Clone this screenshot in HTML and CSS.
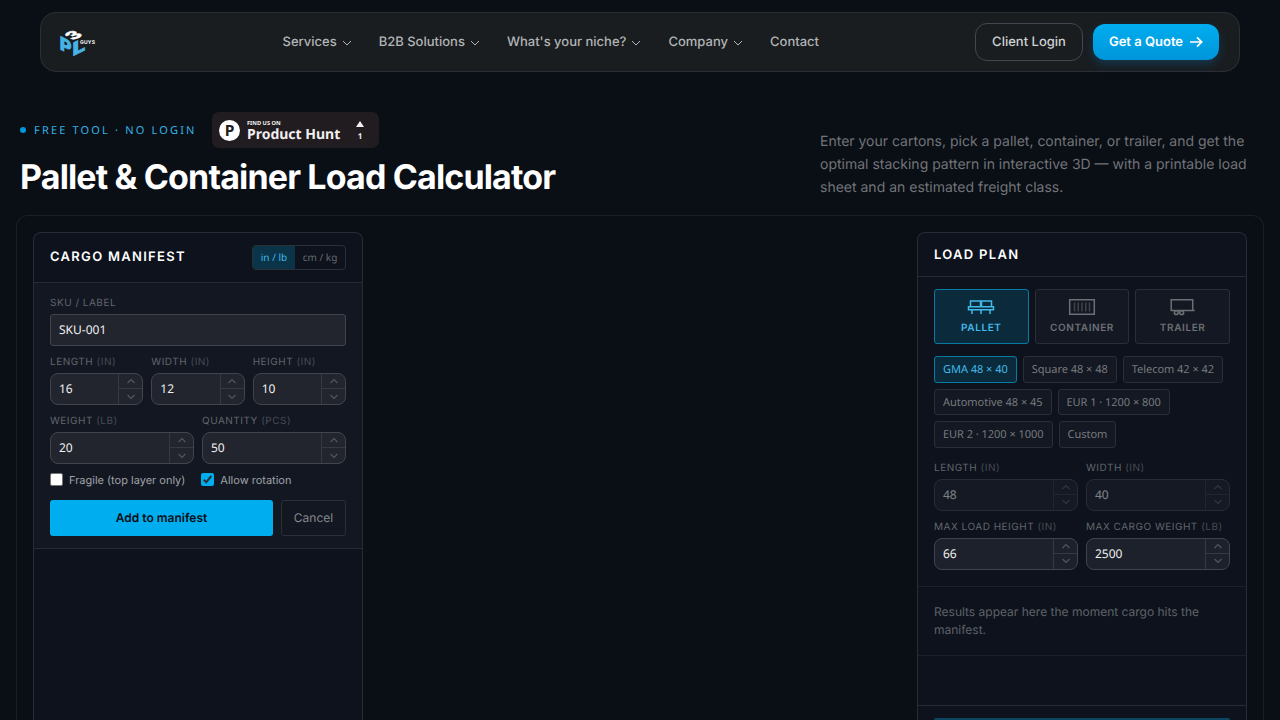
FILE: index.html
```html
<!DOCTYPE html>
<html lang="en">
<head>
<meta charset="utf-8">
<title>Pallet &amp; Container Load Calculator</title>
<link rel="stylesheet" href="styles.css">
</head>
<body>
<svg class="defs" width="0" height="0">
  <symbol id="down" viewBox="0 0 10 6"><path d="M1 1l4 4 4-4" fill="none" stroke="currentColor" stroke-width="1"/></symbol>
  <symbol id="up" viewBox="0 0 10 6"><path d="M1.500 5L5 1.500 8.500 5" fill="none" stroke="currentColor" stroke-width="1.200"/></symbol>
  <symbol id="dn" viewBox="0 0 10 6"><path d="M1.500 1L5 4.500 8.500 1" fill="none" stroke="currentColor" stroke-width="1.200"/></symbol>
</svg>
<header class="nav">
  <svg class="logo" width="36" height="30" viewBox="0 0 36 30">
    <g font-family="Inter, sans-serif" font-weight="800">
      <text transform="matrix(1.050 -.5 .85 .48 12.800 13.600)" font-size="16" fill="#fff" stroke="#fff" stroke-width=".5">3</text>
      <text transform="matrix(1 .5 0 1 -.2 22)" font-size="18" fill="#48b4e6" stroke="#48b4e6" stroke-width=".8">P</text>
      <text transform="matrix(1.250 -.62 0 1 12.400 29.200)" font-size="18" fill="#48b4e6" stroke="#48b4e6" stroke-width=".8">L</text>
      <text x="20" y="16.700" font-size="5" fill="#fff" textLength="15" font-weight="700">GUYS</text>
    </g>
  </svg>
  <nav class="links">
    <a>Services<svg class="chev"><use href="#down"/></svg></a>
    <a>B2B Solutions<svg class="chev"><use href="#down"/></svg></a>
    <a>What's your niche?<svg class="chev"><use href="#down"/></svg></a>
    <a>Company<svg class="chev"><use href="#down"/></svg></a>
    <a>Contact</a>
  </nav>
  <div class="actions">
    <a class="login">Client Login</a>
    <a class="quote">Get a Quote<svg width="14" height="12" viewBox="0 0 14 12"><path d="M1 6h11.500M8 1.300L12.700 6 8 10.700" fill="none" stroke="#fff" stroke-width="1.700"/></svg></a>
  </div>
</header>
<section class="hero">
  <div class="intro">
    <div class="meta">
      <span class="eyebrow"><i class="dot"></i>FREE TOOL · NO LOGIN</span>
      <a class="ph">
        <span class="ph-mark">P</span>
        <span class="ph-name"><small>FIND US ON</small><b>Product Hunt</b></span>
        <span class="ph-votes"><i></i>1</span>
      </a>
    </div>
    <h1>Pallet &amp; Container Load Calculator</h1>
  </div>
  <p class="lead">Enter your cartons, pick a pallet, container, or trailer, and get the optimal stacking pattern in interactive 3D — with a printable load sheet and an estimated freight class.</p>
</section>
<main class="stage">
  <section class="panel">
    <div class="head head-cargo"><h2>CARGO MANIFEST</h2><div class="units"><span class="on">in / lb</span><span>cm / kg</span></div></div>
    <div class="form">
      <div class="field"><label>SKU / LABEL</label><div class="box plain">SKU-001</div></div>
      <div class="three">
        <div class="field"><label>LENGTH <em>(IN)</em></label><div class="box"><span>16</span><div class="step"><i><svg><use href="#up"/></svg></i><i><svg><use href="#dn"/></svg></i></div></div></div>
        <div class="field"><label>WIDTH <em>(IN)</em></label><div class="box"><span>12</span><div class="step"><i><svg><use href="#up"/></svg></i><i><svg><use href="#dn"/></svg></i></div></div></div>
        <div class="field"><label>HEIGHT <em>(IN)</em></label><div class="box"><span>10</span><div class="step"><i><svg><use href="#up"/></svg></i><i><svg><use href="#dn"/></svg></i></div></div></div>
      </div>
      <div class="two">
        <div class="field"><label>WEIGHT <em>(LB)</em></label><div class="box"><span>20</span><div class="step"><i><svg><use href="#up"/></svg></i><i><svg><use href="#dn"/></svg></i></div></div></div>
        <div class="field"><label>QUANTITY <em>(PCS)</em></label><div class="box"><span>50</span><div class="step"><i><svg><use href="#up"/></svg></i><i><svg><use href="#dn"/></svg></i></div></div></div>
      </div>
      <div class="checks">
        <span><i class="check"></i>Fragile (top layer only)</span>
        <span><i class="check checked"><svg width="13" height="13" viewBox="0 0 13 13"><path d="M2.700 6.800L5.200 9.300 10.300 3" fill="none" stroke="#26313b" stroke-width="2"/></svg></i>Allow rotation</span>
      </div>
      <div class="buttons"><a class="add">Add to manifest</a><a class="cancel">Cancel</a></div>
    </div>
  </section>
  <section class="panel">
    <div class="head"><h2>LOAD PLAN</h2></div>
    <div class="plan">
      <div class="modes">
        <a class="on"><svg width="28" height="18" viewBox="0 0 28 18" fill="none" stroke="currentColor" stroke-width="1.500"><path d="M3.500 8.500V3h10v5.500M14.500 8.500V3h10v5.500M1.500 8.800h25v3h-25zM5 12v4M14 12v4M23 12v4"/></svg>PALLET</a>
        <a><svg width="28" height="18" viewBox="0 0 28 18" fill="none" stroke="currentColor" stroke-width="1.500"><path d="M1.700 1.700h24.600v14.600H1.700z"/><path d="M6.500 4.500v9M10.250 4.500v9M14 4.500v9M17.750 4.500v9M21.500 4.500v9" opacity=".5"/></svg>CONTAINER</a>
        <a><svg width="28" height="18" viewBox="0 0 28 18" fill="none" stroke="currentColor" stroke-width="1.500"><path d="M5 12.500H2.200V1.700h21.500v10.800M5 12.500h20.700"/><circle cx="7.300" cy="14.700" r="1.900"/><circle cx="12.700" cy="14.700" r="1.900"/></svg>TRAILER</a>
      </div>
      <div class="chips"><a class="on">GMA 48 × 40</a><a>Square 48 × 48</a><a>Telecom 42 × 42</a><a>Automotive 48 × 45</a><a>EUR 1 · 1200 × 800</a><a>EUR 2 · 1200 × 1000</a><a>Custom</a></div>
      <div class="two">
        <div class="field"><label>LENGTH <em>(IN)</em></label><div class="box off"><span>48</span><div class="step"><i><svg><use href="#up"/></svg></i><i><svg><use href="#dn"/></svg></i></div></div></div>
        <div class="field"><label>WIDTH <em>(IN)</em></label><div class="box off"><span>40</span><div class="step"><i><svg><use href="#up"/></svg></i><i><svg><use href="#dn"/></svg></i></div></div></div>
        <div class="field"><label>MAX LOAD HEIGHT <em>(IN)</em></label><div class="box"><span>66</span><div class="step"><i><svg><use href="#up"/></svg></i><i><svg><use href="#dn"/></svg></i></div></div></div>
        <div class="field"><label>MAX CARGO WEIGHT <em>(LB)</em></label><div class="box"><span>2500</span><div class="step"><i><svg><use href="#up"/></svg></i><i><svg><use href="#dn"/></svg></i></div></div></div>
      </div>
    </div>
    <p class="results">Results appear here the moment cargo hits the manifest.</p>
    <div class="spacer"></div>
    <div class="foot"><div class="bar"></div></div>
  </section>
</main>
</body>
</html>
```

FILE: styles.css
```css
* { box-sizing: border-box; }
html, body { height: 720px; overflow: hidden; }
body { margin: 0; padding-top: 12px; background: #0a0e15; color: #fff; font-family: Inter, sans-serif; text-rendering: geometricPrecision; display: flex; flex-direction: column; }
.defs { display: block; position: absolute; }
h1, h2, p { margin: 0; }
i, em { font-style: normal; }

.nav { flex: none; height: 60px; margin: 0 40px; padding: 0 20px; border: 1px solid #2b3038; border-radius: 16px; background: #191d20; display: grid; grid-template-columns: 222px 1fr auto; align-items: center; }
.logo { display: block; margin-left: -1px; overflow: visible; }
.links { display: flex; gap: 27px; font-size: 13px; font-weight: 500; color: #b2b4b6; margin-left: -.5px; padding-bottom: 1px; }
.links a { display: flex; align-items: center; white-space: nowrap; }
.chev { width: 10px; height: 6px; margin-left: 5px; margin-top: 2px; }
.actions { display: flex; align-items: center; gap: 10px; font-size: 13px; }
.login { height: 38px; width: 108px; padding-bottom: 1px; border: 1px solid #43474f; border-radius: 12px; display: flex; align-items: center; justify-content: center; font-weight: 500; color: #cfd1d3; }
.quote { height: 36px; width: 126px; padding-bottom: 1px; border-radius: 12px; background: linear-gradient(#00adef, #0095da); box-shadow: 0 4px 10px rgba(0, 130, 220, .25); display: flex; align-items: center; justify-content: center; gap: 6px; font-weight: 600; }
.quote svg { margin-top: 1px; }

.hero { flex: none; display: flex; justify-content: space-between; margin: 40px 20px 0; height: 103px; }
.meta { display: flex; align-items: center; gap: 16px; height: 36px; }
.eyebrow { display: flex; align-items: center; width: 176px; padding-top: 1px; font: 11px "Noto Sans", sans-serif; letter-spacing: 2.170px; color: #36b4e5; white-space: nowrap; }
.dot { flex: none; width: 6px; height: 6px; border-radius: 50%; background: #0098dc; margin: 0 8px 1px 0; }
.ph { display: flex; align-items: center; width: 167px; height: 36px; padding-left: 7px; border-radius: 7px; background: #211c20; color: #f1efef; font-family: "Noto Sans", sans-serif; }
.ph-mark { width: 21px; height: 21px; border-radius: 50%; background: #fff; color: #211c20; font: 700 15.500px/21px "Noto Sans", sans-serif; text-align: center; }
.ph-name { width: 95px; margin: 2px 0 0 7px; display: flex; flex-direction: column; white-space: nowrap; }
.ph-name small { font-size: 5.700px; font-weight: 700; line-height: 7px; }
.ph-name b { font-size: 14px; line-height: 16px; }
.ph-votes { width: 36px; margin-top: 2px; display: flex; flex-direction: column; align-items: center; font-size: 8px; font-weight: 700; line-height: 11px; }
.ph-votes i { border: 4px solid transparent; border-top: 0; border-bottom: 6px solid #f1efef; margin-bottom: 4px; }
h1 { margin-top: 9px; font-size: 34px; line-height: 42px; font-weight: 700; letter-spacing: -.85px; white-space: nowrap; }
.lead { width: 440px; margin-top: 18px; font-size: 14px; line-height: 23px; color: #717478; }

.stage { flex: 1; min-height: 0; margin: 0 16px; border: 1px solid #1a1f26; border-bottom: 0; border-radius: 12px 12px 0 0; padding: 16px 16px 0; display: flex; justify-content: space-between; overflow: hidden; }
.panel { width: 330px; border: 1px solid #272b33; border-bottom: 0; border-radius: 8px 8px 0 0; background: #0d121c; overflow: hidden; }
.head { height: 44px; padding: 0 16px; border-bottom: 1px solid #272b33; display: flex; align-items: center; justify-content: space-between; }
.head-cargo { height: 50px; }
h2 { font-size: 13px; line-height: 18px; font-weight: 600; letter-spacing: 1.300px; padding-top: 1px; }
.head-cargo h2 { margin-top: -2px; }
.units { display: flex; width: 94px; height: 25px; border: 1px solid #2b3038; border-radius: 4px; overflow: hidden; font: 10px/23px "Noto Sans", sans-serif; color: #686b71; }
.units span { width: 50px; text-align: center; }
.units .on { width: 42px; background: #0b3448; color: #3fb9ea; }
.form { padding: 12px 16px; background: #121722; border-bottom: 1px solid #272b33; display: grid; gap: 8px; }
.three { display: grid; grid-template-columns: repeat(3, 1fr); gap: 8px; }
.two { display: grid; grid-template-columns: 1fr 1fr; gap: 8px; }
label { display: block; height: 15px; margin-bottom: 4px; font-size: 10px; line-height: 17px; letter-spacing: .5px; color: #62656b; white-space: nowrap; }
label em { color: #484b52; }
.box { height: 32px; border: 1px solid #41444c; border-radius: 8px; background: #22252e; display: flex; align-items: center; justify-content: space-between; padding-left: 8px; overflow: hidden; font: 12px "Noto Sans", sans-serif; color: #f0f0f1; }
.form .box > span, .plain { padding-bottom: 1px; }
.plain { border-radius: 3px; }
.step { width: 24px; height: 30px; border-left: 1px solid #363941; color: #53565d; }
.step i { height: 15px; display: flex; align-items: center; justify-content: center; }
.step i:first-child { border-bottom: 1px solid #363941; }
.step svg { width: 10px; height: 6px; }
.checks { display: flex; gap: 16px; height: 16px; font-size: 11px; color: #a0a2a6; }
.checks span { display: flex; align-items: center; }
.check { width: 13px; height: 13px; margin: 0 6px 1px 0; border: 1px solid #767676; border-radius: 2px; background: #fff; }
.checked { border: 0; background: #00adef; }
.checked svg { display: block; }
.buttons { display: flex; gap: 8px; height: 36px; margin-top: 4px; font-size: 12px; }
.buttons a { display: flex; align-items: center; justify-content: center; border-radius: 3px; padding-bottom: 1px; }
.add { width: 223px; background: #00adef; color: #090d14; font-weight: 600; }
.cancel { width: 65px; border: 1px solid #2b2f38; color: #85888c; }

.plan { padding: 12px 16px 16px; border-bottom: 1px solid #1b2029; }
.modes { display: grid; grid-template-columns: repeat(3, 1fr); gap: 6px; }
.modes a { height: 55px; border: 1px solid #2a2e37; border-radius: 3px; background: #131822; display: flex; flex-direction: column; align-items: center; padding-top: 8px; font-size: 10px; line-height: 14px; font-weight: 600; letter-spacing: .6px; color: #6c6f74; }
.modes svg { margin-bottom: 5px; }
.modes .on, .chips .on { background: #0b2b3c; border-color: #067ba6; color: #43b9e8; }
.chips { display: flex; flex-wrap: wrap; gap: 6px; margin: 12px 0; }
.chips a { height: 26.500px; padding: 0 8px; border: 1px solid #2a2e37; border-radius: 3px; background: #131822; font: 11px/25.500px "Noto Sans", sans-serif; letter-spacing: -.03px; color: #777a7f; }
.plan .box { background: #1c212b; }
.plan .off { opacity: .5; }
.results { padding: 16px; height: 69px; border-bottom: 1px solid #1b2029; font-size: 12px; line-height: 18px; color: #5f6268; }
.spacer { height: 50px; border-bottom: 1px solid #272b33; }
.foot { padding: 12px 16px 0; }
.bar { height: 2px; border-radius: 3px 3px 0 0; background: #0b4560; }
```
